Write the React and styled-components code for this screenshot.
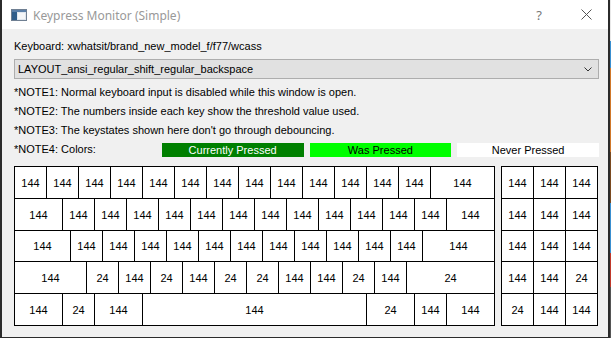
import React from "react";
import styled, { createGlobalStyle } from "styled-components";

const U = 32;

const k = (n, u = 1, v = 144) => Array.from({ length: n }, () => [u, v]);

const mainRows = [
    { h: 32, keys: [...k(13), [2, 144]] },
    { h: 32, keys: [[1.5, 144], ...k(12), [1.5, 144]] },
    { h: 31, keys: [[1.75, 144], ...k(11), [2.25, 144]] },
    {
        h: 32,
        keys: [
            [2.25, 144],
            [1, 24],
            [1, 144],
            [1, 24],
            [1, 144],
            [1, 24],
            [1, 24],
            [1, 144],
            [1, 144],
            [1, 24],
            [1, 144],
            [2.75, 24],
        ],
    },
    {
        h: 32,
        keys: [
            [1.5, 144],
            [1, 24],
            [1.5, 144],
            [7, 144],
            [1.5, 24],
            [1, 144],
            [1.5, 144],
        ],
    },
];

const padRows = [
    { h: 32, keys: [[1, 144], [1, 144], [1, 144]] },
    { h: 32, keys: [[1, 144], [1, 144], [1, 144]] },
    { h: 31, keys: [[1, 144], [1, 144], [1, 144]] },
    { h: 32, keys: [[1, 144], [1, 144], [1, 24]] },
    { h: 32, keys: [[1, 24], [1, 144], [1, 144]] },
];

const notes = [
    "*NOTE1: Normal keyboard input is disabled while this window is open.",
    "*NOTE2: The numbers inside each key show the threshold value used.",
    "*NOTE3: The keystates shown here don't go through debouncing.",
];

function Board({ rows }) {
    return (
        <KeyBlock>
            {rows.map((row, i) => (
                <KeyRow key={i} $h={row.h}>
                    {row.keys.map(([u, v], j) => (
                        <Key key={j} $u={u}>
                            {v}
                        </Key>
                    ))}
                </KeyRow>
            ))}
        </KeyBlock>
    );
}

export default function App() {
    return (
        <>
            <GlobalStyle />
            <Page>
                <Window>
                    <TitleBar>
                        <AppIcon width="16" height="12" viewBox="0 0 16 12">
                            <rect x="0.5" y="0.5" width="15" height="11" fill="#dfe6ee" stroke="#6f7f92" />
                            <rect x="1" y="1" width="14" height="2" fill="#5a7fa8" />
                            <rect x="1" y="3" width="5" height="8" fill="#2f5d8a" />
                            <rect x="7" y="4" width="7" height="6" fill="#f4f6f8" />
                        </AppIcon>
                        <Title>Keypress Monitor (Simple)</Title>
                        <TitleButton>?</TitleButton>
                        <TitleButton>
                            <svg width="11" height="11" viewBox="0 0 11 11">
                                <path d="M0.5 0.5 L10.5 10.5 M10.5 0.5 L0.5 10.5" stroke="#555" strokeWidth="1" />
                            </svg>
                        </TitleButton>
                    </TitleBar>
                    <Content>
                        <Label>Keyboard: xwhatsit/brand_new_model_f/f77/wcass</Label>
                        <Combo>
                            <span>LAYOUT_ansi_regular_shift_regular_backspace</span>
                            <svg width="8" height="5" viewBox="0 0 8 5">
                                <path d="M0.5 0.5 L4 4 L7.5 0.5" fill="none" stroke="#333" strokeWidth="1" />
                            </svg>
                        </Combo>
                        <Notes>
                            {notes.map((n) => (
                                <Note key={n}>{n}</Note>
                            ))}
                        </Notes>
                        <Legend>
                            <Note>*NOTE4: Colors:</Note>
                            <Swatch $bg="#008000" $fg="#ffffff">Currently Pressed</Swatch>
                            <Swatch $bg="#00ff00" $fg="#000000">Was Pressed</Swatch>
                            <Swatch $bg="#ffffff" $fg="#000000">Never Pressed</Swatch>
                        </Legend>
                        <Keyboards>
                            <Board rows={mainRows} />
                            <Board rows={padRows} />
                        </Keyboards>
                    </Content>
                </Window>
                <Desktop />
            </Page>
        </>
    );
}

const GlobalStyle = createGlobalStyle`
    * { box-sizing: border-box; }
    body {
        margin: 0;
        background: #2b2b2b;
        font-family: "Liberation Sans", Arial, sans-serif;
        font-size: 11px;
        color: #000;
    }
`;

const Page = styled.div`
    display: flex;
    width: 611px;
    height: 338px;
    overflow: hidden;
`;
const Window = styled.div`
    width: 610px;
    height: 338px;
    background: #f0f0f0;
    border-left: 2px solid #2b2b2b;
    border-right: 2px solid #2b2b2b;
    border-bottom: 1px solid #2b2b2b;
    display: flex;
    flex-direction: column;
`;
const Desktop = styled.div`
    width: 1px;
    height: 338px;
    background: linear-gradient(#e8e8e8 0 12%, #3a8fd0 12% 20%, #d0782a 20% 45%, #7a4a20 45% 60%, #3a8fd0 60% 75%, #c0392b 75% 85%, #555 85%);
`;
const TitleBar = styled.div`
    height: 29px;
    background: #fff;
    display: flex;
    align-items: center;
`;
const AppIcon = styled.svg`
    margin-left: 9px;
    margin-top: 1px;
    flex-shrink: 0;
`;
const Title = styled.div`
    margin-left: 6px;
    flex: 1;
    font-family: "Noto Sans", "Liberation Sans", sans-serif;
    font-size: 12px;
    color: #999;
    padding-top: 1px;
`;
const TitleButton = styled.div`
    width: 46px;
    height: 29px;
    display: flex;
    align-items: center;
    justify-content: center;
    font-family: "Noto Sans", "Liberation Sans", sans-serif;
    font-size: 13px;
    color: #777;
    &:last-child {
        padding-left: 2px;
    }
`;
const Content = styled.div`
    padding: 9px 9px 0 12px;
    display: flex;
    flex-direction: column;
`;
const Label = styled.div`
    height: 17px;
    line-height: 17px;
`;
const Combo = styled.div`
    margin-top: 4px;
    height: 20px;
    background: #e1e1e1;
    border: 1px solid #adadad;
    display: flex;
    align-items: center;
    justify-content: space-between;
    padding: 0 6px 0 3px;
`;
const Notes = styled.div`
    margin-top: 4px;
    display: flex;
    flex-direction: column;
`;
const Note = styled.div`
    height: 19px;
    line-height: 19px;
`;
const Legend = styled.div`
    display: grid;
    grid-template-columns: repeat(4, 1fr);
    column-gap: 6px;
    align-items: center;
`;
const Swatch = styled.div`
    height: 14px;
    line-height: 14px;
    text-align: center;
    background: ${(p) => p.$bg};
    color: ${(p) => p.$fg};
`;
const Keyboards = styled.div`
    margin-top: 7px;
    display: flex;
    gap: 6px;
`;
const KeyBlock = styled.div`
    background: #fff;
    border-left: 1px solid #000;
    border-top: 1px solid #000;
`;
const KeyRow = styled.div`
    display: flex;
    height: ${(p) => p.$h}px;
    border-bottom: 1px solid #000;
`;
const Key = styled.div`
    width: ${(p) => p.$u * U}px;
    border-right: 1px solid #000;
    display: flex;
    align-items: center;
    justify-content: center;
`;
